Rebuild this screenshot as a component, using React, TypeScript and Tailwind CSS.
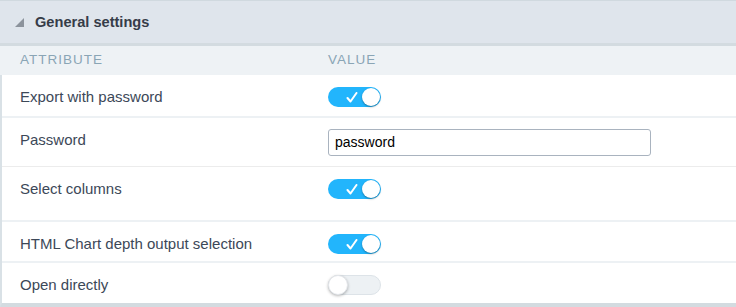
const Toggle = ({ on }: { on: boolean }) => {
    if (on) {
        return (
            <div className="relative w-[53px] h-[20px] rounded-full bg-[#22b5fc]">
                <svg className="absolute left-[18px] top-[5px]" width="12" height="11" viewBox="0 0 12 11">
                    <path d="M1.5 6 L4.5 9.5 L10.5 1" fill="none" stroke="white" strokeWidth="2" strokeLinecap="round" strokeLinejoin="round" />
                </svg>
                <span className="absolute right-[1px] top-[1px] w-[18px] h-[18px] rounded-full bg-white shadow-[0_1px_2px_rgba(0,0,0,0.35)]"></span>
            </div>
        );
    }
    return (
        <div className="relative w-[53px] h-[20px] rounded-full bg-[#edf1f4] border border-[#dde3e8]">
            <span className="absolute left-[-1px] top-[-1px] w-[20px] h-[20px] rounded-full bg-white border border-[#e3e6ea] shadow-[0_1px_3px_rgba(0,0,0,0.3)]"></span>
        </div>
    );
};

const rows = [
    { label: "Export with password", kind: "on", h: "h-[43px]" },
    { label: "Password", kind: "input", h: "h-[49px]" },
    { label: "Select columns", kind: "on", h: "h-[55px]" },
    { label: "HTML Chart depth output selection", kind: "on", h: "h-[41px]" },
    { label: "Open directly", kind: "off", h: "h-[40px]" },
];

const App = () => {
    return (
        <div className="w-[736px] h-[307px] bg-white font-['Liberation_Sans',Arial,sans-serif] overflow-hidden">
            {/* HEADER */}
            <div className="h-[46px] bg-[#dfe5ec] border-t border-[#d0d9df] border-b-[3px] border-b-[#d3dbe0] flex items-center pl-[15px] pt-[1px]">
                <svg width="9" height="9" viewBox="0 0 9 9" className="mr-[11px]">
                    <polygon points="9,0 9,9 0,9" fill="#8c939c" />
                </svg>
                <span className="text-[14.6px] font-bold text-[#363c48]">General settings</span>
            </div>

            {/* TABLE HEAD */}
            <div className="h-[29px] bg-[#eef2f5] flex items-center text-[13.5px] tracking-[1px] text-[#8aa5b5]">
                <div className="w-[328px] pl-[20px]">ATTRIBUTE</div>
                <div>VALUE</div>
            </div>

            {/* ROWS */}
            <div className="border-l-2 border-[#d9e1e6] border-b-4 border-b-[#d3dbe0]">
                {rows.map((r, i) => (
                    <div
                        key={r.label}
                        className={`${r.h} flex ${i < rows.length - 1 ? (i === 1 ? "border-b border-[#ececec]" : "border-b-2 border-[#edf1f4]") : ""}`}>
                        <div className="w-[326px] pl-[18px] pt-[12px] text-[15px] leading-[20px] text-[#3c4858]">{r.label}</div>
                        <div className="pt-[12px]">
                            {r.kind === "input" ? (
                                <input
                                    readOnly
                                    value="password"
                                    className="mt-[-2px] w-[323px] h-[27px] border border-[#a9b3bf] rounded-[3px] px-[6px] text-[14px] text-black outline-none font-['Liberation_Sans',Arial,sans-serif]"
                                />
                            ) : (
                                <Toggle on={r.kind === "on"} />
                            )}
                        </div>
                    </div>
                ))}
            </div>
        </div>
    );
};

export default App;
